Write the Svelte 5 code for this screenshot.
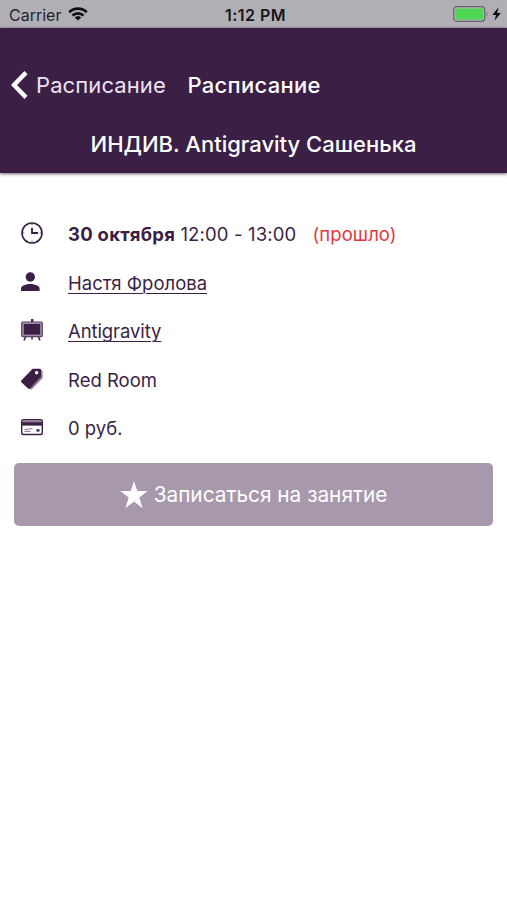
<script>
    let title = "ИНДИВ. Antigravity Сашенька";
    let details = [
        {icon: "person", text: "Настя Фролова", link: true},
        {icon: "board", text: "Antigravity", link: true},
        {icon: "tag", text: "Red Room", link: false},
        {icon: "card", text: "0 руб.", link: false}
    ];
</script>

<div class="screen">
    <div class="status">
        <div class="carrier">
            <span>Carrier</span>
            <svg width="20" height="14" viewBox="0 0 20 14" fill="none" stroke="#111" stroke-width="2.7">
                <path d="M1.2 5.2a12.6 12.6 0 0 1 17.6 0M4.4 8.6a8.2 8.2 0 0 1 11.2 0" />
                <path d="M10 13.6L6.7 10.6a4.8 4.8 0 0 1 6.6 0z" fill="#111" stroke="none" />
            </svg>
        </div>
        <span class="time">1:12 PM</span>
        <svg class="battery" width="49" height="17" viewBox="0 0 49 17">
            <rect x=".7" y=".7" width="31" height="14.6" rx="3" fill="none" stroke="#67666c" stroke-width="1.2" />
            <rect x="2.4" y="2.4" width="27.6" height="11.2" rx="1.4" fill="#4cd653" />
            <path d="M33.5 5.5q2 2.5 0 5z" fill="#67666c" />
            <path d="M45.6 1.2L39.3 9h3.7l-1.5 5.8L47.9 7h-3.7z" fill="#111" />
        </svg>
    </div>

    <header>
        <div class="nav">
            <button class="back">
                <svg width="17" height="28" viewBox="0 0 17 28" fill="none" stroke="#fff" stroke-width="4.4">
                    <path d="M15 1.6L3 14l12 12.4" />
                </svg>
                <span>Расписание</span>
            </button>
            <span class="current">Расписание</span>
        </div>
        <h1><span>{title}</span></h1>
    </header>

    <main>
        <div class="row">
            <svg width="24" height="24" viewBox="0 0 24 24" fill="none" stroke="#3b1f45">
                <circle cx="12" cy="11" r="10" stroke-width="1.6" />
                <path d="M12 5.8V11h6" stroke-width="1.8" />
                <path d="M12 2.2v1M12 18.8v1M3.2 11h1M19.8 11h1" stroke-width="1" />
            </svg>
            <span class="date"><b>30 октября</b> <span class="hours">12:00 - 13:00</span></span>
            <span class="past">(прошло)</span>
        </div>
        {#each details as {icon, text, link}}
            <div class="row">
                <svg width="24" height="24" viewBox="0 0 24 24" fill="#3b1f45">
                    {#if icon == "person"}
                        <circle cx="10.3" cy="6" r="4.7" />
                        <path d="M1 20v-2.4c0-3 5.5-4.6 9.3-4.6s9.3 1.6 9.3 4.6V20z" />
                    {:else if icon == "board"}
                        <rect x="11" y="0" width="2.4" height="3" />
                        <rect x="1.7" y="3" width="20.6" height="14.6" rx="1" fill="#a18fa8" stroke="#5c4565" stroke-width="1.2" />
                        <rect x="3.8" y="5" width="16.4" height="10.6" />
                        <path d="M5.5 18L4 21.5M18.5 18L20 21.5M12 18V20.5" stroke="#3b1f45" stroke-width="1.5" />
                    {:else if icon == "tag"}
                        <path d="M20.3 1.4L22.6 3v7L11.5 21.6 8.8 20.8z" fill="#8d7795" />
                        <path fill-rule="evenodd" d="M12.6.7h7.2q1.2 0 1.2 1.2v6.7L9.8 20.4q-.8.9-1.7 0L1.3 14.2q-.9-.8 0-1.7zM16.7 3a1.8 1.8 0 1 0 0 3.6a1.8 1.8 0 1 0 0-3.6z" />
                    {:else}
                        <rect x="1.7" y="3.7" width="20.6" height="14.8" rx="1.8" fill="#fff" stroke="#3b1f45" stroke-width="1.4" />
                        <path d="M2 4.5h20v2H2z" fill="#8d7795" />
                        <path d="M2 6.2h20v3.4H2z" />
                        <path d="M4.5 13.7l4-.6 4-.4M4.5 15.4h6" fill="none" stroke="#77617f" stroke-width=".9" />
                        <path d="M16.5 13.2h3v2.4h-3z" />
                    {/if}
                </svg>
                <span class={icon} class:link>{text}</span>
            </div>
        {/each}

        <button class="book">
            <svg width="28" height="28" viewBox="0 0 28 28" fill="#fff">
                <path d="M14 0l3.3 10h10.5l-8.5 6.4 3.3 10.8-8.6-6.6-8.6 6.6 3.300-10.800L.2 10h10.500z" />
            </svg>
            <span>Записаться на занятие</span>
        </button>
    </main>
</div>

<style>
    :global(body) {
        background: #fff;
    }
    .screen {
        font-family: Inter, "Liberation Sans", sans-serif;
        color: #3b1f45;
        height: 900px;
        overflow: hidden;
    }
    button {
        font-family: inherit;
        border: 0;
        padding: 0;
        margin: 0;
        color: #fff;
    }
    svg {
        flex: none;
        display: block;
    }
    span {
        white-space: nowrap;
    }
    .status {
        box-sizing: border-box;
        height: 28px;
        padding: 2px 5px 0 9px;
        display: grid;
        grid-template-columns: 1fr auto 1fr;
        align-items: center;
        background: #b1afb6;
        border-bottom: 1px solid #a79fac;
        color: #26252a;
        font-size: 16px;
    }
    .carrier {
        display: flex;
        align-items: center;
        gap: 7px;
    }
    .carrier svg {
        margin-top: -2px;
    }
    .time {
        font-weight: 600;
        letter-spacing: .5px;
        color: #17161a;
    }
    .battery {
        justify-self: end;
    }
    header {
        box-sizing: border-box;
        height: 145px;
        padding-top: 37px;
        background: #3b1f45;
        color: #fff;
        box-shadow: 0 1px 3px rgba(50, 25, 40, .7);
    }
    .nav {
        display: flex;
        align-items: center;
        height: 40px;
        padding-left: 11px;
    }
    .back {
        display: flex;
        align-items: center;
        gap: 8px;
        background: none;
        font-size: 22px;
        letter-spacing: .1px;
        color: #eee3f1;
    }
    .current {
        margin-left: 21.5px;
        font-size: 22px;
        font-weight: 500;
        letter-spacing: .3px;
    }
    h1 {
        margin: 24px 0 0;
        text-align: center;
        font-size: 22px;
        line-height: 30px;
        font-weight: 500;
    }
    main {
        padding: 37px 14px 0;
    }
    .row {
        display: flex;
        align-items: center;
        height: 48.5px;
        padding-left: 6px;
        font-size: 18.5px;
    }
    .row svg {
        margin-right: 24px;
    }
    .date b {
        letter-spacing: .25px;
    }
    .hours {
        letter-spacing: .15px;
    }
    .past {
        margin-left: 16px;
        letter-spacing: .1px;
        color: #de3a3d;
    }
    .board {
        letter-spacing: -.1px;
    }
    .link {
        text-decoration: underline;
        text-decoration-thickness: 1px;
        text-underline-offset: 3px;
    }
    .book {
        display: flex;
        align-items: center;
        justify-content: center;
        gap: 6px;
        width: 479px;
        height: 63px;
        margin-top: 10.5px;
        border-radius: 5px;
        background: #a799ab;
        font-size: 20.8px;
    }
</style>
